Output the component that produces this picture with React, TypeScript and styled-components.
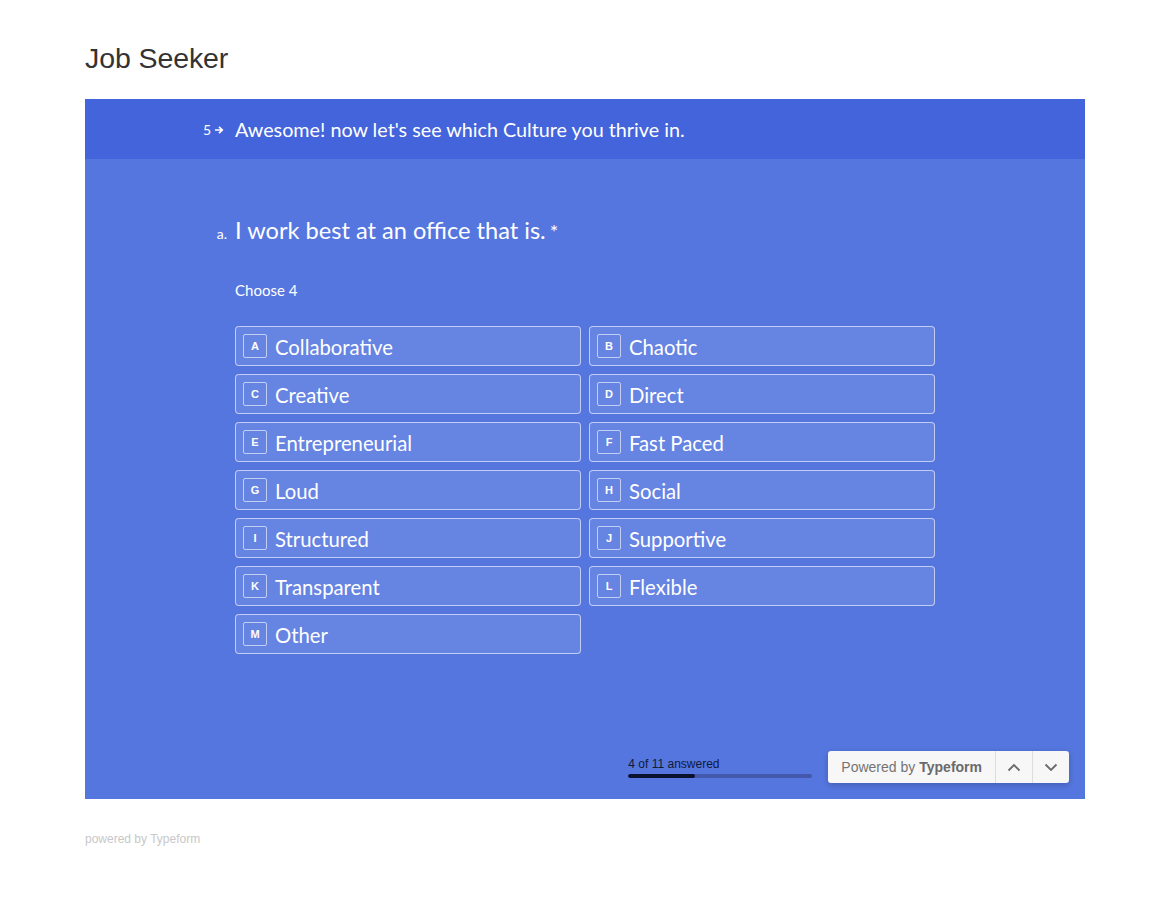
import React from 'react';
import styled, { createGlobalStyle } from 'styled-components';

const GlobalStyle = createGlobalStyle`
  html, body {
    margin: 0;
    padding: 0;
    background: #ffffff;
    font-family: 'Liberation Sans', Arial, sans-serif;
  }
`;

const options = [
  'Collaborative',
  'Chaotic',
  'Creative',
  'Direct',
  'Entrepreneurial',
  'Fast Paced',
  'Loud',
  'Social',
  'Structured',
  'Supportive',
  'Transparent',
  'Flexible',
  'Other',
];

const StyledPage = styled.div`
  padding: 42px 85px 0 85px;
  width: 1000px;
`;

const StyledTitle = styled.h1`
  margin: 0 0 24px 0;
  font-family: 'Liberation Sans', Arial, sans-serif;
  font-weight: 400;
  font-size: 28.5px;
  line-height: 33px;
  color: #333333;
  letter-spacing: -0.1px;
`;

const StyledForm = styled.div`
  width: 1000px;
  height: 700px;
  display: flex;
  flex-direction: column;
  background: #5576df;
  font-family: Lato, 'Open Sans', sans-serif;
  color: #ffffff;
`;

const StyledHeader = styled.div`
  height: 60px;
  flex-shrink: 0;
  background: #4364da;
  display: flex;
  align-items: center;
  padding-left: 118px;
  gap: 7px;
`;

const StyledCounter = styled.div`
  display: flex;
  align-items: center;
  gap: 3px;
  font-size: 14px;
  width: 25px;
  margin-top: 1px;
`;

const StyledHeaderText = styled.div`
  font-size: 19.75px;
`;

const StyledBody = styled.div`
  flex: 1;
  display: flex;
  flex-direction: column;
  padding: 56px 16px 16px 131px;
`;

const StyledQuestionRow = styled.div`
  display: flex;
  align-items: baseline;
  gap: 8px;
`;

const StyledQuestionIndex = styled.span`
  font-size: 14px;
  width: 11px;
  text-align: right;
`;

const StyledQuestionText = styled.span`
  font-size: 23.6px;
  line-height: 30px;
`;

const StyledAsterisk = styled.span`
  font-size: 20px;
  margin-left: 4px;
`;

const StyledHint = styled.div`
  margin: 34px 0 0 19px;
  font-size: 15px;
  line-height: 20px;
`;

const StyledGrid = styled.div`
  margin: 26px 0 0 19px;
  display: grid;
  grid-template-columns: 346px 346px;
  gap: 8px;
`;

const StyledOption = styled.div`
  height: 40px;
  box-sizing: border-box;
  display: flex;
  align-items: center;
  gap: 8px;
  padding-left: 7px;
  border: 1px solid rgba(255, 255, 255, 0.6);
  border-radius: 4px;
  background: rgba(255, 255, 255, 0.1);
`;

const StyledKey = styled.div`
  width: 24px;
  height: 24px;
  box-sizing: border-box;
  border: 1px solid rgba(255, 255, 255, 0.6);
  border-radius: 2px;
  display: flex;
  align-items: center;
  justify-content: center;
  font-family: 'Liberation Sans', Arial, sans-serif;
  font-weight: 700;
  font-size: 11px;
`;

const StyledOptionLabel = styled.div`
  font-size: 20.3px;
  line-height: 24px;
  padding-top: 2px;
`;

const StyledFooter = styled.div`
  margin-top: auto;
  display: flex;
  justify-content: flex-end;
  align-items: center;
  gap: 16px;
`;

const StyledProgress = styled.div`
  width: 184px;
  font-family: 'Liberation Sans', Arial, sans-serif;
  font-size: 12px;
  color: #0f1a3a;
`;

const StyledTrack = styled.div`
  margin-top: 3px;
  height: 4px;
  border-radius: 2px;
  background: #4459ae;
  overflow: hidden;
`;

const StyledFill = styled.div`
  height: 100%;
  background: #0b1230;
  border-radius: 2px;
`;

const StyledBadge = styled.div`
  height: 32px;
  display: flex;
  background: #f7f7f7;
  border-radius: 3px;
  box-shadow: 0 2px 6px rgba(0, 0, 0, 0.2);
  font-family: 'Liberation Sans', Arial, sans-serif;
  color: #747474;
`;

const StyledPowered = styled.div`
  display: flex;
  align-items: center;
  padding: 0 13px;
  font-size: 14px;

  b {
    margin-left: 4px;
    color: #6a6a6a;
  }
`;

const StyledNavButton = styled.div`
  width: 36px;
  display: flex;
  align-items: center;
  justify-content: center;
  border-left: 1px solid #dddddd;
`;

const StyledPoweredFooter = styled.div`
  margin-top: 33px;
  font-family: 'Liberation Sans', Arial, sans-serif;
  font-size: 12px;
  color: #c8c8c8;
`;

const Chevron: React.FC<{ up?: boolean }> = ({ up }) => (
  <svg width="14" height="9" viewBox="0 0 14 9">
    <polyline
      points={up ? '1.5,7.5 7,2 12.5,7.5' : '1.5,1.5 7,7 12.5,1.5'}
      fill="none"
      stroke="#6a6a6a"
      strokeWidth="1.8"
    />
  </svg>
);

const App: React.FC = () => {
  const answered = 4;
  const total = 11;

  return (
    <StyledPage>
      <GlobalStyle />
      <StyledTitle>Job Seeker</StyledTitle>
      <StyledForm>
        <StyledHeader>
          <StyledCounter>
            5
            <svg width="10" height="10" viewBox="0 0 10 10">
              <path
                d="M1 5h7M5 1.8L8.3 5 5 8.2"
                fill="none"
                stroke="#fff"
                strokeWidth="1.7"
              />
            </svg>
          </StyledCounter>
          <StyledHeaderText>
            Awesome! now let's see which Culture you thrive in.
          </StyledHeaderText>
        </StyledHeader>
        <StyledBody>
          <StyledQuestionRow>
            <StyledQuestionIndex>a.</StyledQuestionIndex>
            <StyledQuestionText>
              I work best at an office that is.
              <StyledAsterisk>*</StyledAsterisk>
            </StyledQuestionText>
          </StyledQuestionRow>
          <StyledHint>Choose 4</StyledHint>
          <StyledGrid>
            {options.map((label, i) => (
              <StyledOption key={label}>
                <StyledKey>{String.fromCharCode(65 + i)}</StyledKey>
                <StyledOptionLabel>{label}</StyledOptionLabel>
              </StyledOption>
            ))}
          </StyledGrid>
          <StyledFooter>
            <StyledProgress>
              {answered} of {total} answered
              <StyledTrack>
                <StyledFill style={{ width: `${(answered / total) * 100}%` }} />
              </StyledTrack>
            </StyledProgress>
            <StyledBadge>
              <StyledPowered>
                Powered by <b>Typeform</b>
              </StyledPowered>
              <StyledNavButton>
                <Chevron up />
              </StyledNavButton>
              <StyledNavButton>
                <Chevron />
              </StyledNavButton>
            </StyledBadge>
          </StyledFooter>
        </StyledBody>
      </StyledForm>
      <StyledPoweredFooter>powered by Typeform</StyledPoweredFooter>
    </StyledPage>
  );
};

export default App;
